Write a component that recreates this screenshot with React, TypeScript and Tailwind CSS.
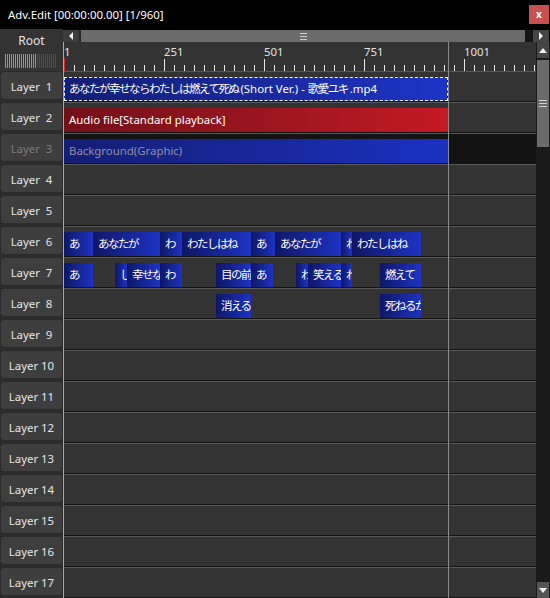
import React from "react";

type Obj = { s: number; e: number; t: string };

const L6: Obj[] = [
  { s: 0, e: 29, t: "あ" },
  { s: 29, e: 96, t: "あなたが" },
  { s: 96, e: 118, t: "わ" },
  { s: 118, e: 187, t: "わたしはね" },
  { s: 187, e: 211, t: "あ" },
  { s: 211, e: 277, t: "あなたが" },
  { s: 277, e: 288, t: "わ" },
  { s: 288, e: 357, t: "わたしはね" },
];
const L7: Obj[] = [
  { s: 0, e: 29, t: "あ" },
  { s: 51, e: 63, t: "し" },
  { s: 63, e: 96, t: "幸せな" },
  { s: 96, e: 118, t: "わ" },
  { s: 152, e: 187, t: "目の前" },
  { s: 187, e: 209, t: "あ" },
  { s: 232, e: 244, t: "わ" },
  { s: 244, e: 277, t: "笑える" },
  { s: 277, e: 288, t: "わ" },
  { s: 316, e: 357, t: "燃えて" },
];
const L8: Obj[] = [
  { s: 152, e: 187, t: "消える" },
  { s: 316, e: 357, t: "死ねるか" },
];

const layerObjs: Record<number, Obj[]> = { 6: L6, 7: L7, 8: L8 };

function JP({ children, tail }: { children: React.ReactNode; tail?: boolean }) {
  return <span className={`text-[11.5px] tracking-[-1.5px] ${tail ? "pr-[2px]" : ""}`}>{children}</span>;
}

function Clip({ o }: { o: Obj }) {
  return (
    <div
      className="absolute top-[5px] h-[24px] overflow-hidden bg-linear-to-r from-[#0e1766] to-[#1d33c4] text-white whitespace-nowrap flex items-center pl-[5px]"
      style={{ left: o.s, width: o.e - o.s }}
    >
      <JP>{o.t}</JP>
    </div>
  );
}

function TitleBar() {
  return (
    <div className="h-[29px] shrink-0 flex items-center justify-between pl-[8px] pr-[1px] bg-black">
      <span className="text-white">Adv.Edit [00:00:00.00] [1/960]</span>
      <div className="w-[20px] h-[19px] bg-[#c75050] flex items-center justify-center text-white text-[10px] font-bold pb-[2px]">
        x
      </div>
    </div>
  );
}

function LeftPanel() {
  const rows = Array.from({ length: 17 }, (_, i) => i + 1);
  return (
    <div className="w-[63px] shrink-0 bg-[#2c2c2c] flex flex-col">
      <div className="h-[42px] shrink-0 bg-[#333333] flex flex-col">
        <div className="h-[22px] flex items-center justify-center text-[#e4e4e4] text-[12px] pt-[1px]">Root</div>
        <div className="mt-[3px] ml-[5px] flex gap-px h-[14px]">
          {Array.from({ length: 26 }, (_, i) => (
            <span key={i} className={`w-px h-full ${i < 16 ? "bg-[#6f99de]" : "bg-[#33507e]"}`} />
          ))}
        </div>
      </div>
      {rows.map((n) => (
        <div key={n} className="h-[31px] shrink-0 px-[1px] pt-[1px]">
          <div
            className={`h-[27px] rounded-[3px] bg-[#3e3e3e] flex items-center justify-center pt-[3px] whitespace-pre ${
              n === 3 ? "text-[#7c7c7c]" : "text-[#e6e6e6]"
            }`}
          >
            {n < 10 ? `Layer  ${n}` : `Layer ${n}`}
          </div>
        </div>
      ))}
    </div>
  );
}

function Grip({ vertical }: { vertical?: boolean }) {
  return (
    <div className={`flex flex-col gap-[2px] ${vertical ? "w-[8px]" : "w-[7px]"}`}>
      <span className="h-px bg-[#d0d0d0]" />
      <span className="h-px bg-[#d0d0d0]" />
      <span className="h-px bg-[#d0d0d0]" />
    </div>
  );
}

function HScroll() {
  return (
    <div className="h-[13px] shrink-0 flex bg-black pt-[1px]">
      <div className="w-[16px] bg-[#3c3c3c] flex items-center justify-center">
        <svg width="6" height="8" viewBox="0 0 6 8">
          <path d="M5 0 L1 4 L5 8 Z" fill="#f0f0f0" />
        </svg>
      </div>
      <div className="w-[2px] bg-[#262626]" />
      <div className="flex-1 bg-[#6b6b6b] flex items-center justify-center">
        <Grip />
      </div>
      <div className="w-[8px] bg-[#141414]" />
      <div className="w-[16px] bg-[#454545] flex items-center justify-center">
        <svg width="6" height="8" viewBox="0 0 6 8">
          <path d="M1 0 L5 4 L1 8 Z" fill="#f0f0f0" />
        </svg>
      </div>
      <div className="w-px bg-black" />
    </div>
  );
}

function VScroll() {
  return (
    <div className="w-[14px] shrink-0 bg-[#1a1a1a] flex flex-col pl-[1px] pr-[1px]">
      <div className="h-[16px] bg-[#454545] flex items-center justify-center">
        <svg width="8" height="5" viewBox="0 0 8 5">
          <path d="M0 5 L4 0 L8 5 Z" fill="#f0f0f0" />
        </svg>
      </div>
      <div className="h-[2px]" />
      <div className="h-[87px] bg-[#6b6b6b] flex items-center justify-center">
        <Grip vertical />
      </div>
      <div className="flex-1" />
      <div className="h-[16px] bg-[#555555] flex items-center justify-center">
        <svg width="8" height="5" viewBox="0 0 8 5">
          <path d="M0 0 L8 0 L4 5 Z" fill="#f0f0f0" />
        </svg>
      </div>
    </div>
  );
}

function Ruler() {
  const ticks = Array.from({ length: 48 }, (_, i) => i * 10);
  const labels = ["1", "251", "501", "751", "1001"];
  return (
    <div className="relative h-[29px] shrink-0 bg-[#333333]">
      <svg className="absolute inset-0" width="472" height="29">
        {ticks.map((x) =>
          x % 100 === 0 ? (
            <rect key={x} x={x} y={17} width={1} height={12} fill="#e8e8e8" />
          ) : (
            <rect key={x} x={x} y={23} width={1} height={6} fill="#e8e8e8" />
          )
        )}
        <rect x={0} y={16} width={1} height={13} fill="#e0202a" />
      </svg>
      {labels.map((l, i) => (
        <span key={l} className="absolute top-[4px] text-[#e2e2e2]" style={{ left: i * 100 }}>
          {l}
        </span>
      ))}
    </div>
  );
}

function Row({ n }: { n: number }) {
  const hidden = n === 3;
  return (
    <div
      className={`relative h-[31px] shrink-0 border-t border-t-[#5a5a5a] border-b border-b-[#121212] ${
        hidden ? "bg-[#131313]" : "bg-[#333333]"
      }`}
    >
      {n === 1 && (
        <div className="absolute top-[5px] left-0 w-[384px] h-[24px] overflow-hidden bg-linear-to-r from-[#141e74] to-[#1d34c6] border border-dashed border-white text-white whitespace-pre flex items-center pl-[4px]">
          <JP tail>あなたが幸せならわたしは燃えて死ぬ</JP>
          <span>(Short Ver.) - </span>
          <JP tail>歌愛ユキ</JP>
          <span>.mp4</span>
        </div>
      )}
      {n === 2 && (
        <div className="absolute top-[5px] left-0 w-[384px] h-[24px] overflow-hidden bg-linear-to-r from-[#721018] to-[#c41a24] text-white whitespace-nowrap flex items-center pl-[5px]">
          Audio file[Standard playback]
        </div>
      )}
      {n === 3 && (
        <div className="absolute top-[5px] left-0 w-[384px] h-[24px] overflow-hidden bg-linear-to-r from-[#141e74] to-[#1a31c2] text-[#8f8fa6] whitespace-nowrap flex items-center pl-[5px]">
          Background(Graphic)
        </div>
      )}
      {(layerObjs[n] || []).map((o, i) => (
        <Clip key={i} o={o} />
      ))}
    </div>
  );
}

function Timeline() {
  const rows = Array.from({ length: 17 }, (_, i) => i + 1);
  return (
    <div className="relative w-[472px] shrink-0 flex flex-col overflow-hidden">
      <Ruler />
      {rows.map((n) => (
        <Row key={n} n={n} />
      ))}
      <div className="absolute top-0 bottom-0 left-[384px] w-px bg-[#8a8a8a]" />
    </div>
  );
}

export default function App() {
  return (
    <div className="w-[550px] h-[598px] bg-black overflow-hidden flex flex-col font-['Noto_Sans','Noto_Sans_CJK_JP',sans-serif] text-[11.4px] leading-none select-none">
      <TitleBar />
      <div className="flex flex-1 min-h-0">
        <LeftPanel />
        <div className="flex flex-col flex-1 min-w-0">
          <HScroll />
          <div className="flex flex-1 min-h-0">
            <div className="w-px shrink-0 bg-[#3ed4d0]" />
            <Timeline />
            <VScroll />
          </div>
        </div>
      </div>
    </div>
  );
}
